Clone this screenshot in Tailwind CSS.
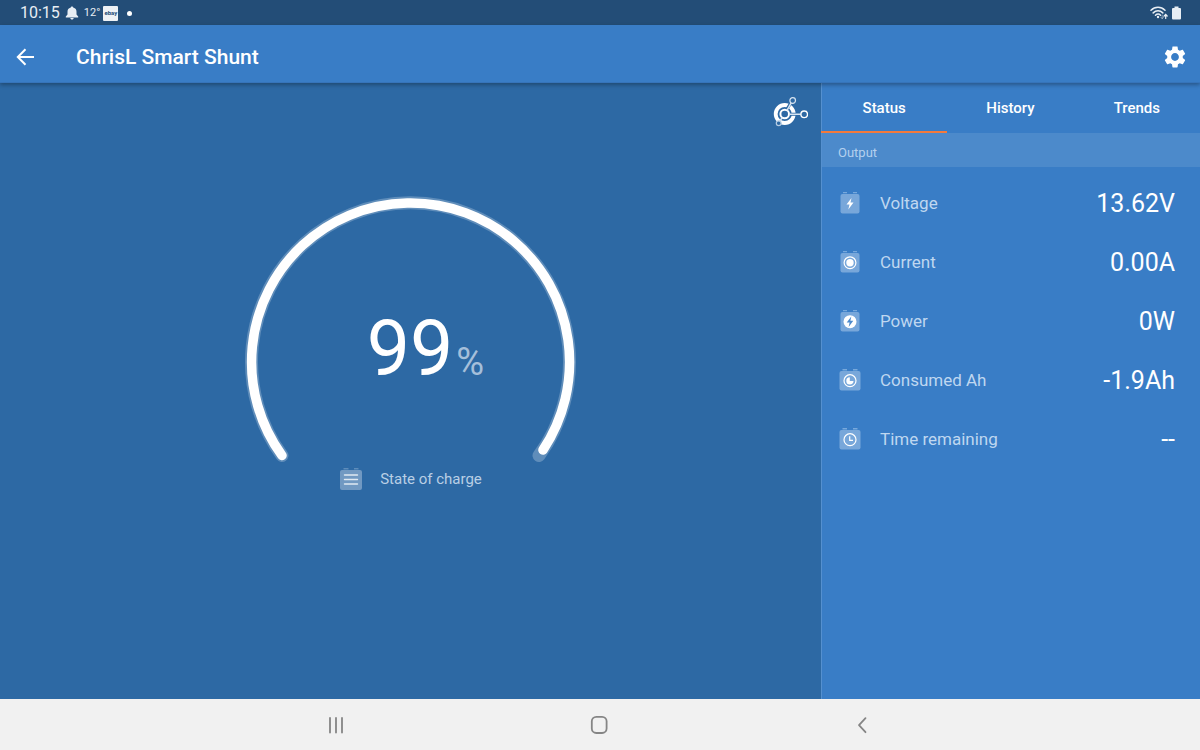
<!DOCTYPE html>
<html lang="en">
<head>
<meta charset="utf-8">
<meta name="viewport" content="width=device-width, initial-scale=1">
<title>ChrisL Smart Shunt</title>
<script src="https://cdn.jsdelivr.net/npm/@tailwindcss/browser@4"></script>
</head>
<body class="flex min-h-screen flex-col bg-[#2d69a4] font-[Roboto,sans-serif] text-white">

<!-- System status bar -->
<div class="flex h-[25px] shrink-0 items-center justify-between bg-[#234d77] pt-px pr-[19px] pl-5 text-[#e8eef4]">
  <div class="flex items-center">
    <span class="text-base leading-6">10:15</span>
    <svg class="ml-[5px] h-[14px] w-[14px]" viewBox="0 0 14 14" fill="currentColor" aria-hidden="true"><path d="M7 .5c.7 0 1.2.5 1.2 1.1C10.600 2.200 11.500 3.800 11.500 5.800v2.600l1.700 2.200v.8H.8v-.8l1.700-2.200V5.800c0-2 .9-3.600 3.300-4.200C5.800 1 6.300.5 7 .5zM5.300 12.100h3.400c0 .9-.7 1.500-1.700 1.500s-1.700-.6-1.700-1.500z"/></svg>
    <span class="ml-[5px] text-[11px] leading-6">12°</span>
    <span class="ml-[3px] flex h-[15px] w-[15px] items-center justify-center rounded-[1px] bg-[#edf1f5] text-[6px] leading-none font-bold text-[#234d77]">ebay</span>
    <span class="ml-[9px] h-[5px] w-[5px] rounded-full bg-white"></span>
  </div>
  <div class="flex items-center gap-[4px]">
    <svg class="h-[14px] w-[18px]" viewBox="0 0 18 14" fill="none" stroke="currentColor" stroke-width="1.500" stroke-linecap="round" aria-hidden="true">
      <path d="M1 4.300c4-4 10-4 14 0M3.200 6.900c2.800-2.800 6.800-2.800 9.600 0M5.500 9.200c1.600-1.500 3.600-1.500 5 0"/>
      <circle cx="8" cy="11" r="1.200" fill="currentColor" stroke="none"/>
      <path d="M12.200 9v3.500M11 11.400l1.200 1.300 1.200-1.300" stroke-width="1" opacity=".5"/>
      <path d="M15.700 12.500V9M14.200 10l1.500-1.700L17.200 10z" stroke-width="1.200" fill="currentColor"/>
    </svg>
    <svg class="h-[14px] w-[9px]" viewBox="0 0 9 14" fill="currentColor" aria-hidden="true"><path d="M2.500.5h4v1.500H8q1 0 1 1v9.500q0 1-1 1H1q-1 0-1-1V3q0-1 1-1h1.500z"/></svg>
  </div>
</div>

<!-- App bar -->
<header class="z-10 flex h-[58px] shrink-0 items-center border-b border-[#3674ba] bg-[#397dc6] pr-3 pl-[13px] shadow-[0_2px_4px_rgba(0,0,0,0.3)]">
  <button type="button" aria-label="Back" class="flex h-10 w-6 items-center justify-center pt-[7px]">
    <svg class="h-6 w-6" viewBox="0 0 24 24" fill="none" stroke="currentColor" stroke-width="2" aria-hidden="true"><path d="M21 12H5.500M12.500 4.200L4.800 12l7.700 7.800"/></svg>
  </button>
  <h1 class="ml-[39px] flex-1 pt-[7px] text-[21px] leading-7 font-medium">ChrisL Smart Shunt</h1>
  <button type="button" aria-label="Settings" class="flex h-10 w-[26px] items-center justify-center pt-[7px]">
    <svg class="h-[26px] w-[26px]" viewBox="0 0 24 24" fill="currentColor" aria-hidden="true"><path d="M19.140 12.940c.04-.3.060-.61.060-.94 0-.32-.02-.64-.07-.94l2.030-1.580c.18-.14.230-.41.120-.61l-1.920-3.320c-.12-.22-.37-.29-.59-.22l-2.390.96c-.5-.38-1.030-.7-1.620-.94l-.36-2.540c-.04-.24-.24-.41-.48-.41h-3.840c-.24 0-.43.17-.47.41l-.36 2.540c-.59.24-1.130.57-1.620.94l-2.390-.96c-.22-.08-.47 0-.59.22L2.740 8.870c-.12.21-.08.47.12.61l2.030 1.580c-.05.3-.09.63-.09.94s.02.64.07.94l-2.030 1.580c-.18.14-.23.41-.12.61l1.920 3.320c.12.22.37.29.59.22l2.390-.96c.5.38 1.030.7 1.620.94l.36 2.540c.05.24.24.41.48.41h3.840c.24 0 .44-.17.47-.41l.36-2.540c.59-.24 1.130-.56 1.620-.94l2.390.96c.22.08.47 0 .59-.22l1.920-3.320c.12-.22.07-.47-.12-.61l-2.010-1.580zM12 15.600c-1.980 0-3.600-1.620-3.600-3.600s1.620-3.600 3.600-3.600 3.600 1.620 3.600 3.600-1.620 3.600-3.600 3.600z"/></svg>
  </button>
</header>

<main class="flex flex-1 items-stretch">

  <!-- State of charge gauge -->
  <section class="relative flex flex-1 flex-col items-center pt-[102px]">
    <svg class="absolute top-[14px] right-[13px] h-[32px] w-[36px]" viewBox="0 0 36 32" fill="none" aria-hidden="true">
      <circle cx="12.700" cy="17" r="9" stroke="#fff" stroke-width="3.800"/>
      <path d="M14.500 13L19 5.500M17 17.300H28" stroke="#2d69a4" stroke-width="3"/>
      <circle cx="12.700" cy="17" r="4.300" stroke="#fff" stroke-width="2"/>
      <path d="M15 13.300L19.200 5.800M17 17.300H28.800M10.300 20.500L7.800 24.200" stroke="#d8e5f2" stroke-width="1.500"/>
      <circle cx="20.700" cy="3.500" r="2.800" stroke="#d8e5f2" stroke-width="1.200"/>
      <circle cx="32.200" cy="17.300" r="3.300" stroke="#fff" stroke-width="1.400"/>
      <circle cx="6.700" cy="26.300" r="2.400" fill="#2d69a4" stroke="#b5cce3" stroke-width="1.200"/>
    </svg>

    <div class="grid justify-items-center">
      <svg class="col-start-1 row-start-1 h-[280px] w-[350px]" viewBox="0 0 350 280" fill="none" stroke-linecap="round" aria-hidden="true">
        <path d="M46 270.500A159 159 0 1 1 303 270.500" stroke="#5f8dba" stroke-width="13"/>
        <path d="M46 270.500A159 159 0 1 1 307 265" stroke="#fff" stroke-width="9.500"/>
      </svg>
      <p class="col-start-1 row-start-1 flex items-baseline gap-[3px] pt-[119px] pl-[30px]">
        <span class="text-[77px] leading-[90px]">99</span>
        <span class="text-[38px] leading-[44px] text-[#a5bfda]">%</span>
      </p>
    </div>

    <div class="flex h-[27px] items-center gap-[18px] pl-px">
      <svg class="h-[22px] w-[22px]" viewBox="0 0 22 22" aria-hidden="true">
        <path d="M3.500 0h5v1.600h-5zM14 0h4.500v1.600H14z" fill="#5d8cba"/>
        <rect y="2" width="22" height="20" rx="2" fill="#7199c2"/>
        <path d="M4.500 7h13M4.500 11.500h13M4.500 16h13" stroke="#dfe9f2" stroke-width="1.400" stroke-linecap="round"/>
      </svg>
      <span class="text-[15px] leading-5 text-[#b9cfe5]">State of charge</span>
    </div>
  </section>

  <!-- Readings -->
  <aside class="w-[379px] shrink-0 border-l border-[#5590cf] bg-[#397dc6]">
    <div role="tablist" class="-ml-px grid h-[50px] grid-cols-3 text-[15px] leading-5 font-medium">
      <button type="button" role="tab" aria-selected="true" class="border-b-2 border-[#f47a3c] pt-px">Status</button>
      <button type="button" role="tab" aria-selected="false" class="border-b-2 border-transparent pt-px">History</button>
      <button type="button" role="tab" aria-selected="false" class="border-b-2 border-transparent pt-px">Trends</button>
    </div>
    <h2 class="flex h-[34px] items-center bg-[#4c8acb] pt-[5px] pl-4 text-[13px] leading-5 text-[#b3d0ee]">Output</h2>

    <dl class="pt-[6px] pr-[25px] pl-[17px] text-[#bfd7f0]">
      <div class="flex h-[59px] items-center">
        <svg class="h-[22px] w-[22px]" viewBox="0 0 22 22" aria-hidden="true">
          <path d="M4 0h4v1.200H4zM14 0h4v1.200h-4z" fill="#78a9dc"/><rect x="1.500" y="2" width="19" height="19.500" rx="2" fill="#78a7da"/>
          <path d="M12.500 6L7.500 12.600h3l-1.200 5L14.500 10.600h-3z" fill="#fff"/>
        </svg>
        <dt class="ml-[19px] flex-1 text-[17px] leading-6">Voltage</dt><dd class="pt-[2px] text-[25px] leading-8 text-white">13.62V</dd>
      </div>
      <div class="flex h-[59px] items-center">
        <svg class="h-[22px] w-[22px]" viewBox="0 0 22 22" aria-hidden="true">
          <path d="M4 0h4v1.200H4zM14 0h4v1.200h-4z" fill="#78a9dc"/><rect x="1.500" y="2" width="19" height="19.500" rx="2" fill="#78a7da"/>
          <circle cx="11" cy="11.700" r="5.900" fill="none" stroke="#fff" stroke-width="1.200"/><circle cx="11" cy="11.700" r="3.700" fill="#fff"/>
        </svg>
        <dt class="ml-[19px] flex-1 text-[17px] leading-6">Current</dt><dd class="pt-[2px] text-[25px] leading-8 text-white">0.00A</dd>
      </div>
      <div class="flex h-[59px] items-center">
        <svg class="h-[22px] w-[22px]" viewBox="0 0 22 22" aria-hidden="true">
          <path d="M4 0h4v1.200H4zM14 0h4v1.200h-4z" fill="#78a9dc"/><rect x="1.500" y="2" width="19" height="19.500" rx="2" fill="#78a7da"/>
          <circle cx="11" cy="11.700" r="6.500" fill="#fff"/><path d="M12.300 6.500L7.700 12.600h2.900l-1 4.500L14.300 10.800h-2.900z" fill="#4d8acb"/>
        </svg>
        <dt class="ml-[19px] flex-1 text-[17px] leading-6">Power</dt><dd class="pt-[2px] text-[25px] leading-8 text-white">0W</dd>
      </div>
      <div class="flex h-[59px] items-center">
        <svg class="h-[22px] w-[22px]" viewBox="0 0 22 22" aria-hidden="true">
          <path d="M3.500 0h4.500v1.400H3.500zM14 0h4.500v1.400H14z" fill="#78a9dc"/><rect x=".5" y="2" width="21" height="19.500" rx="2" fill="#78a7da"/>
          <circle cx="11" cy="11.700" r="6" fill="none" stroke="#fff" stroke-width="1.200"/><path d="M10.800 8.300A3.600 3.600 0 1 0 14.500 12H10.800z" fill="#fff"/>
        </svg>
        <dt class="ml-[19px] flex-1 text-[17px] leading-6">Consumed Ah</dt><dd class="pt-[2px] text-[25px] leading-8 text-white">-1.9Ah</dd>
      </div>
      <div class="flex h-[59px] items-center">
        <svg class="h-[22px] w-[22px]" viewBox="0 0 22 22" aria-hidden="true">
          <path d="M3.500 0h4.500v1.400H3.500zM14 0h4.500v1.400H14z" fill="#78a9dc"/><rect x=".5" y="2" width="21" height="19.500" rx="2" fill="#78a7da"/>
          <circle cx="11" cy="11.700" r="6" fill="none" stroke="#fff" stroke-width="1.200"/><path d="M10.700 8.300V12.300H14" fill="none" stroke="#fff" stroke-width="1.200"/>
        </svg>
        <dt class="ml-[19px] flex-1 text-[17px] leading-6">Time remaining</dt><dd class="pt-[2px] text-[25px] leading-8 text-white">--</dd>
      </div>
    </dl>
  </aside>
</main>

<!-- System navigation -->
<nav class="flex h-[51px] shrink-0 items-center justify-center gap-[239px] bg-[#f1f1f1] pt-px text-[#858585]">
  <button type="button" aria-label="Recent apps" class="flex h-10 w-6 items-center justify-center">
    <svg class="h-6 w-6" viewBox="0 0 24 24" stroke="currentColor" stroke-width="1.800" stroke-linecap="round" aria-hidden="true"><path d="M5 5v14.500M11 5v14.500M17 5v14.500"/></svg>
  </button>
  <button type="button" aria-label="Home" class="flex h-10 w-6 items-center justify-center">
    <svg class="h-6 w-6" viewBox="0 0 24 24" fill="none" stroke="currentColor" stroke-width="1.800" aria-hidden="true"><rect x="3.800" y="3.800" width="14.800" height="16.200" rx="4.500"/></svg>
  </button>
  <button type="button" aria-label="Back" class="flex h-10 w-6 items-center justify-center">
    <svg class="h-6 w-6" viewBox="0 0 24 24" fill="none" stroke="currentColor" stroke-width="1.800" stroke-linecap="round" stroke-linejoin="round" aria-hidden="true"><path d="M14.500 5.200L8 12.200l6.500 7"/></svg>
  </button>
</nav>
</body>
</html>
